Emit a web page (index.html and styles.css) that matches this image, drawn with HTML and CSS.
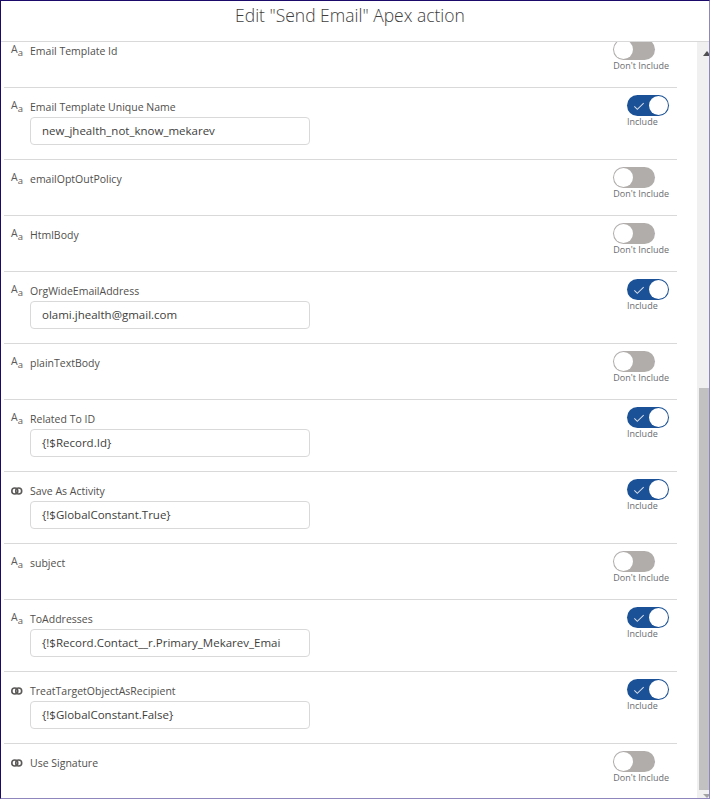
FILE: index.html
```html
<!DOCTYPE html>
<html lang="en">
<head>
<meta charset="utf-8">
<title>Edit "Send Email" Apex action</title>
<link rel="stylesheet" href="styles.css">
</head>
<body>
<svg class="defs" width="0" height="0" aria-hidden="true">
  <symbol id="bool-icon" viewBox="0 0 14 14">
    <circle cx="4.8" cy="7" r="3" fill="none" stroke="#5c5a58" stroke-width="1.6"/>
    <circle cx="8.7" cy="7" r="3" fill="none" stroke="#5c5a58" stroke-width="1.6"/>
  </symbol>
</svg>
<main class="dialog">
  <header class="title-bar"><h1 class="title">Edit "Send Email" Apex action</h1></header>
  <div class="body">
    <div class="list-clip">
      <ul class="list">
        <li class="row">
          <div class="field"><div class="label"><span class="aa"><span class="aa-big">A</span><span class="aa-small">a</span></span>Email Template Id</div></div>
          <div class="state"><span class="toggle"></span><span class="state-text">Don't Include</span></div>
        </li>
        <li class="row">
          <div class="field"><div class="label"><span class="aa"><span class="aa-big">A</span><span class="aa-small">a</span></span>Email Template Unique Name</div><div class="input">new_jhealth_not_know_mekarev</div></div>
          <div class="state"><span class="toggle on"><svg class="check" viewBox="0 0 14 10"><path d="M1.5 5.2 5 8.6 12.5 1.4"/></svg></span><span class="state-text">Include</span></div>
        </li>
        <li class="row">
          <div class="field"><div class="label"><span class="aa"><span class="aa-big">A</span><span class="aa-small">a</span></span>emailOptOutPolicy</div></div>
          <div class="state"><span class="toggle"></span><span class="state-text">Don't Include</span></div>
        </li>
        <li class="row">
          <div class="field"><div class="label"><span class="aa"><span class="aa-big">A</span><span class="aa-small">a</span></span>HtmlBody</div></div>
          <div class="state"><span class="toggle"></span><span class="state-text">Don't Include</span></div>
        </li>
        <li class="row">
          <div class="field"><div class="label"><span class="aa"><span class="aa-big">A</span><span class="aa-small">a</span></span>OrgWideEmailAddress</div><div class="input">olami.jhealth@gmail.com</div></div>
          <div class="state"><span class="toggle on"><svg class="check" viewBox="0 0 14 10"><path d="M1.5 5.2 5 8.6 12.5 1.4"/></svg></span><span class="state-text">Include</span></div>
        </li>
        <li class="row">
          <div class="field"><div class="label"><span class="aa"><span class="aa-big">A</span><span class="aa-small">a</span></span>plainTextBody</div></div>
          <div class="state"><span class="toggle"></span><span class="state-text">Don't Include</span></div>
        </li>
        <li class="row">
          <div class="field"><div class="label"><span class="aa"><span class="aa-big">A</span><span class="aa-small">a</span></span>Related To ID</div><div class="input">{!$Record.Id}</div></div>
          <div class="state"><span class="toggle on"><svg class="check" viewBox="0 0 14 10"><path d="M1.5 5.2 5 8.6 12.5 1.4"/></svg></span><span class="state-text">Include</span></div>
        </li>
        <li class="row">
          <div class="field"><div class="label"><svg class="icon"><use href="#bool-icon"/></svg>Save As Activity</div><div class="input">{!$GlobalConstant.True}</div></div>
          <div class="state"><span class="toggle on"><svg class="check" viewBox="0 0 14 10"><path d="M1.5 5.2 5 8.6 12.5 1.4"/></svg></span><span class="state-text">Include</span></div>
        </li>
        <li class="row">
          <div class="field"><div class="label"><span class="aa"><span class="aa-big">A</span><span class="aa-small">a</span></span>subject</div></div>
          <div class="state"><span class="toggle"></span><span class="state-text">Don't Include</span></div>
        </li>
        <li class="row">
          <div class="field"><div class="label"><span class="aa"><span class="aa-big">A</span><span class="aa-small">a</span></span>ToAddresses</div><div class="input">{!$Record.Contact__r.Primary_Mekarev_Emai</div></div>
          <div class="state"><span class="toggle on"><svg class="check" viewBox="0 0 14 10"><path d="M1.5 5.2 5 8.6 12.5 1.4"/></svg></span><span class="state-text">Include</span></div>
        </li>
        <li class="row">
          <div class="field"><div class="label"><svg class="icon"><use href="#bool-icon"/></svg>TreatTargetObjectAsRecipient</div><div class="input">{!$GlobalConstant.False}</div></div>
          <div class="state"><span class="toggle on"><svg class="check" viewBox="0 0 14 10"><path d="M1.5 5.2 5 8.6 12.5 1.4"/></svg></span><span class="state-text">Include</span></div>
        </li>
        <li class="row">
          <div class="field"><div class="label"><svg class="icon"><use href="#bool-icon"/></svg>Use Signature</div></div>
          <div class="state"><span class="toggle"></span><span class="state-text">Don't Include</span></div>
        </li>
      </ul>
    </div>
    <div class="scrollbar">
      <span class="arrow up"></span>
      <div class="track"><div class="thumb"></div></div>
      <span class="arrow down"></span>
    </div>
  </div>
</main>
</body>
</html>
```
FILE: styles.css
```css
* { box-sizing: border-box; }
html, body { margin: 0; height: 100%; background: #fff; }
body { font-family: "Open Sans", "Liberation Sans", sans-serif; color: #3e3e3c; overflow: hidden; }
.defs { position: absolute; }
.dialog {
  width: 710px; height: 799px; display: flex; flex-direction: column;
  border-top: 1px solid #1c0a6b; border-left: 1px solid #1c0a6b;
  border-right: 1px solid #8f86bd; border-bottom: 1px solid #8f86bd;
}
.title-bar { height: 41px; flex: none; border-bottom: 1px solid #d9d9d9; padding: 3px 10px 0 0; text-align: center; }
.title { margin: 0; font-size: 17.5px; line-height: 22px; font-weight: 300; color: #3e3e3c; }
.body { flex: 1; display: flex; min-height: 0; }
.list-clip { flex: 1; min-width: 0; overflow: hidden; }
.list { list-style: none; margin: -10px 0 0; padding: 0 20px 0 3px; }
.row {
  height: 56px; display: flex; justify-content: space-between; align-items: flex-start;
  padding: 11px 8px 0 6px; border-bottom: 1px solid #d9d9d9;
}
.row:has(.input) { height: 72px; }
.field { min-width: 0; }
.label { display: flex; align-items: center; height: 16px; font-size: 10.5px; line-height: 16px; color: #514f4d; }
.icon { width: 14px; height: 14px; margin-right: 6px; flex: none; }
.aa { width: 14px; height: 14px; margin-right: 6px; flex: none; display: flex; padding-left: 1px; color: #5c5a58; }
.aa-big { font-size: 10.5px; line-height: 10px; }
.aa-small { font-size: 9.5px; line-height: 10px; margin-top: 4px; }
.input {
  width: 280px; height: 28px; margin: 2px 0 0 20px; padding: 0 11px;
  border: 1px solid #d9d9d9; border-radius: 4px;
  font-size: 11.5px; line-height: 26px; color: #3e3e3c; white-space: nowrap; overflow: hidden;
}
.state { display: flex; flex-direction: column; align-items: flex-start; margin: -4px 0 0; }
.toggle {
  position: relative; width: 42px; height: 21px; border-radius: 11px;
  background: #b0adab; display: block;
}
.toggle::after {
  content: ""; position: absolute; top: 1px; left: 1px; width: 19px; height: 19px;
  border-radius: 50%; background: #fff;
}
.toggle.on { background: #1b5297; }
.toggle.on::after { left: 22px; }
.check { position: absolute; left: 6px; top: 7px; width: 12px; height: 8.5px; fill: none; stroke: #d8dde6; stroke-width: 1.2; }
.state-text { font-size: 9px; line-height: 11px; color: #6b6d70; white-space: nowrap; }
.scrollbar { width: 12px; flex: none; background: #f0f0f0; display: flex; flex-direction: column; position: relative; overflow: hidden; }
.arrow { flex: none; width: 0; height: 0; margin-left: 6px; border-left: 4px solid transparent; border-right: 4px solid transparent; }
.arrow.up { margin-top: 9px; border-bottom: 5px solid #505050; }
.arrow.down { margin: 4px 0 0 6px; border-top: 4px solid #a3a3a3; }
.track { flex: 1; padding: 332px 0 0 2px; }
.thumb { height: 100%; background: #c1c1c1; }
```
